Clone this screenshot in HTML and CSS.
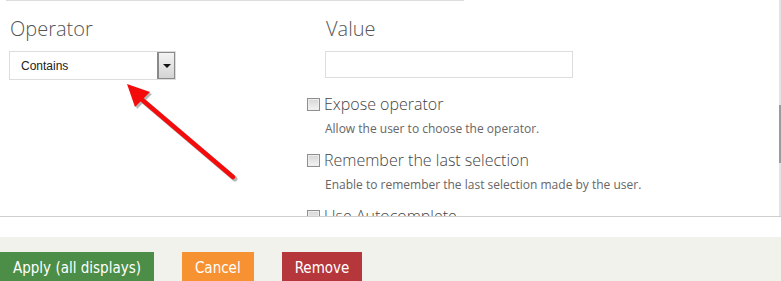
FILE: index.html
```html
<!DOCTYPE html>
<html lang="en">
<head>
  <meta charset="utf-8">
  <title>Filter settings</title>
  <link rel="stylesheet" href="styles.css">
</head>
<body>
  <div class="panel">
    <div class="top-rule"></div>

    <div class="fields">
      <div class="field">
        <h2>Operator</h2>
        <div class="select">
          <span>Contains</span>
          <span class="select-btn"><i></i></span>
        </div>
      </div>

      <div class="field value-field">
        <h2>Value</h2>
        <div class="text-input"></div>

        <div class="options">
          <div class="option">
            <label><span class="check"></span>Expose operator</label>
            <p>Allow the user to choose the operator.</p>
          </div>
          <div class="option">
            <label><span class="check"></span>Remember the last selection</label>
            <p>Enable to remember the last selection made by the user.</p>
          </div>
          <div class="option">
            <label><span class="check"></span>Use Autocomplete</label>
          </div>
        </div>
      </div>
    </div>

    <div class="scrollbar"><div class="thumb"></div></div>

    <!-- стрелка-подсказка -->
    <svg class="arrow" width="140" height="120" viewBox="110 70 140 120">
      <g fill="#7d7d7d" opacity="0.55" transform="translate(2 2)">
        <polygon points="127,84 150,92 135,107"/>
        <line x1="140" y1="98" x2="233" y2="177" stroke="#7d7d7d" stroke-width="5" stroke-linecap="round"/>
      </g>
      <polygon points="127,84 150,92 135,107" fill="#f40b0b"/>
      <line x1="140" y1="98" x2="233" y2="177" stroke="#f40b0b" stroke-width="4.5" stroke-linecap="round"/>
    </svg>
  </div>

  <div class="gap"></div>

  <div class="footer">
    <button class="btn btn-apply">Apply (all displays)</button>
    <button class="btn btn-cancel">Cancel</button>
    <button class="btn btn-remove">Remove</button>
  </div>
</body>
</html>
```

FILE: styles.css
```css
body {
  margin: 0;
  font-family: "Open Sans", sans-serif;
  color: #555;
  background: #fff;
}

.panel {
  position: relative;
  height: 217px;
  width: 781px;
  box-sizing: border-box;
  border-bottom: 1px solid #cfcfcf;
  overflow: hidden;
}
.top-rule {
  margin-left: 6px;
  width: 458px;
  height: 1px;
  background: #ddd;
}

.fields {
  display: grid;
  grid-template-columns: 316px 1fr;
  padding-left: 9px;
}
.field h2 {
  margin: 14px 0 9px 1px;
  font-size: 20px;
  font-weight: 300;
  line-height: 27px;
  color: #555;
}

/* Выпадающий список */
.select {
  display: flex;
  align-items: center;
  justify-content: space-between;
  width: 167px;
  height: 29px;
  box-sizing: border-box;
  border: 1px solid #ddd;
  font-family: "Liberation Sans", Arial, sans-serif;
  font-size: 12px;
  color: #222;
}
.select span:first-child { padding-left: 11px; }
.select-btn {
  display: flex;
  align-items: center;
  justify-content: center;
  width: 18px;
  height: 27px;
  box-sizing: border-box;
  border: 1px solid #8a8a8a;
  border-left-width: 2px;
  background: linear-gradient(#f3f3f3, #d4d4d4);
}
.select-btn i {
  width: 0; height: 0;
  border-left: 4px solid transparent;
  border-right: 4px solid transparent;
  border-top: 4px solid #111;
}

.text-input {
  width: 248px;
  height: 27px;
  box-sizing: border-box;
  border: 1px solid #ddd;
}

/* Чекбоксы */
.options { margin: 16px 0 0 -18px; }
.option { margin-bottom: 14px; }
.option label {
  display: flex;
  align-items: center;
  font-size: 16px;
  font-weight: 300;
  line-height: 20px;
  color: #444;
}
.check {
  width: 13px;
  height: 13px;
  box-sizing: border-box;
  margin-right: 4px;
  border: 1px solid #8f8f8f;
  background: linear-gradient(#d6d6d6, #f4f4f4);
  box-shadow: inset 0 0 0 1px #eee;
}
.option p {
  margin: 7px 0 0 18px;
  font-size: 12px;
  line-height: 15px;
  color: #666;
}

.scrollbar {
  position: absolute;
  top: 0; right: 0;
  width: 2px;
  height: 100%;
  background: #e4e4e4;
}
.thumb {
  margin-top: 105px;
  height: 58px;
  width: 2px;
  background: #9c9c9c;
}

.arrow {
  position: absolute;
  left: 110px;
  top: 70px;
}

.gap { height: 20px; }

.footer {
  display: flex;
  gap: 28px;
  height: 44px;
  padding-top: 15px;
  box-sizing: border-box;
  background: #f2f2ed;
  overflow: hidden;
}
.btn {
  flex: none;
  height: 31px;
  padding: 0 13px;
  border: none;
  font-family: "DejaVu Sans Condensed", "DejaVu Sans", Verdana, sans-serif;
  font-size: 15px;
  color: #fff;
}
.btn-apply { background: #4c8e47; }
.btn-cancel { background: #f79232; }
.btn-remove { background: #b5373b; }
```
